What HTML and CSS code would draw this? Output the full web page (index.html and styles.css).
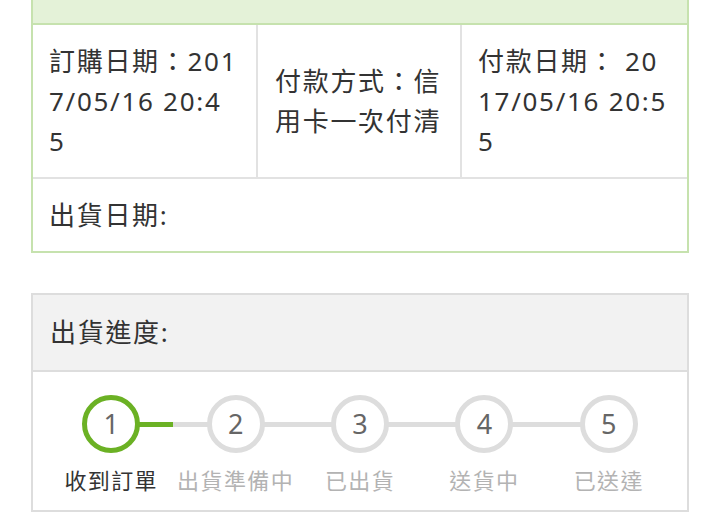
FILE: index.html
```html
<!DOCTYPE html>
<html lang="zh-Hant">
<head>
<meta charset="UTF-8" />
<meta name="viewport" content="width=device-width, initial-scale=1" />
<title>訂單明細</title>
<link rel="stylesheet" href="styles.css">
</head>
<body>

<div class="page">

  <div class="panel panel-order">
    <div class="panel-head"></div>
    <div class="order-row">
      <div class="cell cell-date">訂購日期：2017/05/16 20:45</div>
      <div class="cell cell-pay">付款方式：信用卡一次付清</div>
      <div class="cell cell-paid">付款日期： 2017/05/16 20:55</div>
    </div>
    <div class="cell cell-full">出貨日期:</div>
  </div>

  <div class="panel panel-ship">
    <div class="panel-head">出貨進度:</div>
    <div class="steps">
      <div class="step done">
        <span class="dot">1</span>
        <span class="label">收到訂單</span>
      </div>
      <div class="step">
        <span class="dot">2</span>
        <span class="label">出貨準備中</span>
      </div>
      <div class="step">
        <span class="dot">3</span>
        <span class="label">已出貨</span>
      </div>
      <div class="step">
        <span class="dot">4</span>
        <span class="label">送貨中</span>
      </div>
      <div class="step">
        <span class="dot">5</span>
        <span class="label">已送達</span>
      </div>
    </div>
  </div>

</div>

</body>
</html>
```

FILE: styles.css
```css
body {
  margin: 0;
  background: #fff;
  color: #333;
  font-family: "Noto Sans", "Noto Sans CJK TC", sans-serif;
  font-size: 26px;
  line-height: 40px;
  letter-spacing: 1.7px;
}
.page { padding: 0 31px; }

.panel { border: 2px solid #ddd; box-sizing: border-box; }
.panel-head { background: #f2f2f2; border-bottom: 2px solid #ddd; padding: 17px 17px 18px; }

.panel-order { border-color: #c6e2ae; border-top: none; }
.panel-order .panel-head { height: 23px; padding: 0; background: #e4f2d8; border-bottom-color: #c6e2ae; }

.order-row { display: grid; grid-template-columns: 223px 204px 1fr; border-bottom: 2px solid #e2e2e2; }
.cell { padding: 16px 16px 16px 16px; word-break: break-all; display: flex; align-items: center; }
.order-row .cell + .cell { border-left: 2px solid #e2e2e2; }
.cell-date { padding-left: 16px; padding-right: 18px; }
.cell-pay { padding-left: 17px; padding-right: 12px; }
.cell-paid { padding-left: 16px; padding-right: 17px; }
.cell-full { padding: 16px 16px; }

.panel-ship { margin-top: 40px; }
.steps { display: flex; padding: 23px 16px 13px; }
.step { flex: 1; display: flex; flex-direction: column; align-items: center; position: relative; }
.step + .step::before {
  content: "";
  position: absolute;
  top: 27px;
  right: 50%;
  width: 100%;
  height: 5px;
  background: #ddd;
  z-index: 0;
}
.dot {
  position: relative;
  z-index: 1;
  width: 48px;
  height: 48px;
  border: 5px solid #ddd;
  border-radius: 50%;
  background: #fff;
  color: #666;
  display: flex;
  align-items: center;
  justify-content: center;
  font-size: 27px;
  letter-spacing: 0;
}
.label { margin-top: 10px; font-size: 22px; line-height: 34px; letter-spacing: 1.4px; color: #b3b3b3; }

.step.done .dot { border-color: #6bb124; }
.step.done .label { color: #333; }
.step.done + .step::before { background: linear-gradient(to right, #6bb124 50%, #ddd 50%); }
```
